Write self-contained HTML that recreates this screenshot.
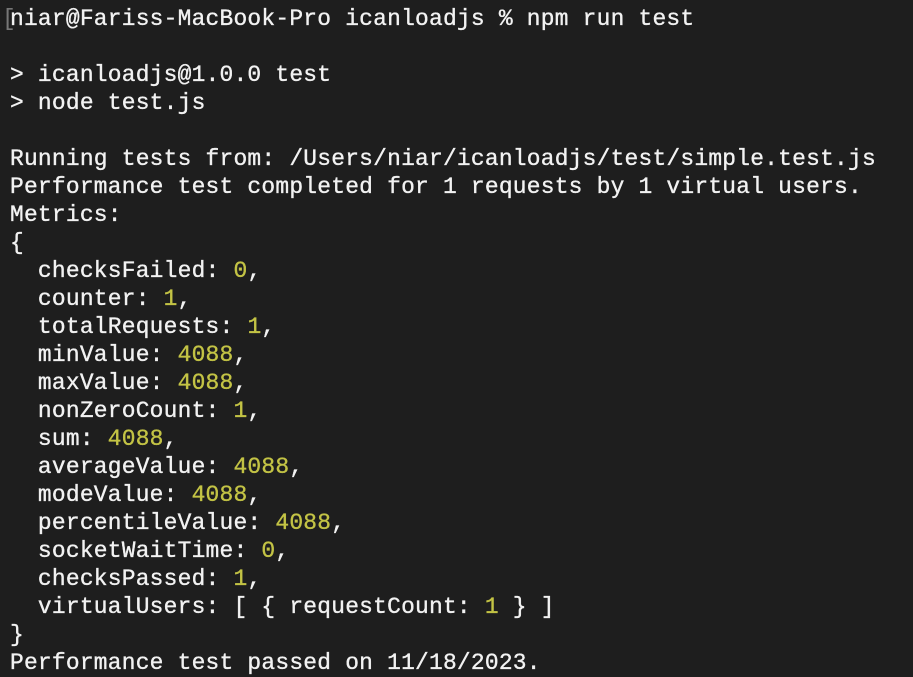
<html><head><style>
body{margin:0;background:#1e1e1e;width:913px;height:677px;overflow:hidden}
pre{margin:0;padding:5px 0 0 10px;font-family:"Liberation Mono",monospace;font-size:22.9px;line-height:28px;color:#f2f2f2;font-weight:normal;letter-spacing:0.23px;-webkit-text-stroke:0.35px #f2f2f2}
.n{color:#c3c345;-webkit-text-stroke:0.35px #c3c345}.g{color:#777;position:absolute;left:2px;-webkit-text-stroke:0}
</style></head><body><pre><span class="g">[</span>niar@Fariss-MacBook-Pro icanloadjs % npm run test

&gt; icanloadjs@1.0.0 test
&gt; node test.js

Running tests from: /Users/niar/icanloadjs/test/simple.test.js
Performance test completed for 1 requests by 1 virtual users.
Metrics:
{
  checksFailed: <span class="n">0</span>,
  counter: <span class="n">1</span>,
  totalRequests: <span class="n">1</span>,
  minValue: <span class="n">4088</span>,
  maxValue: <span class="n">4088</span>,
  nonZeroCount: <span class="n">1</span>,
  sum: <span class="n">4088</span>,
  averageValue: <span class="n">4088</span>,
  modeValue: <span class="n">4088</span>,
  percentileValue: <span class="n">4088</span>,
  socketWaitTime: <span class="n">0</span>,
  checksPassed: <span class="n">1</span>,
  virtualUsers: [ { requestCount: <span class="n">1</span> } ]
}
Performance test passed on 11/18/2023.</pre></body></html>
